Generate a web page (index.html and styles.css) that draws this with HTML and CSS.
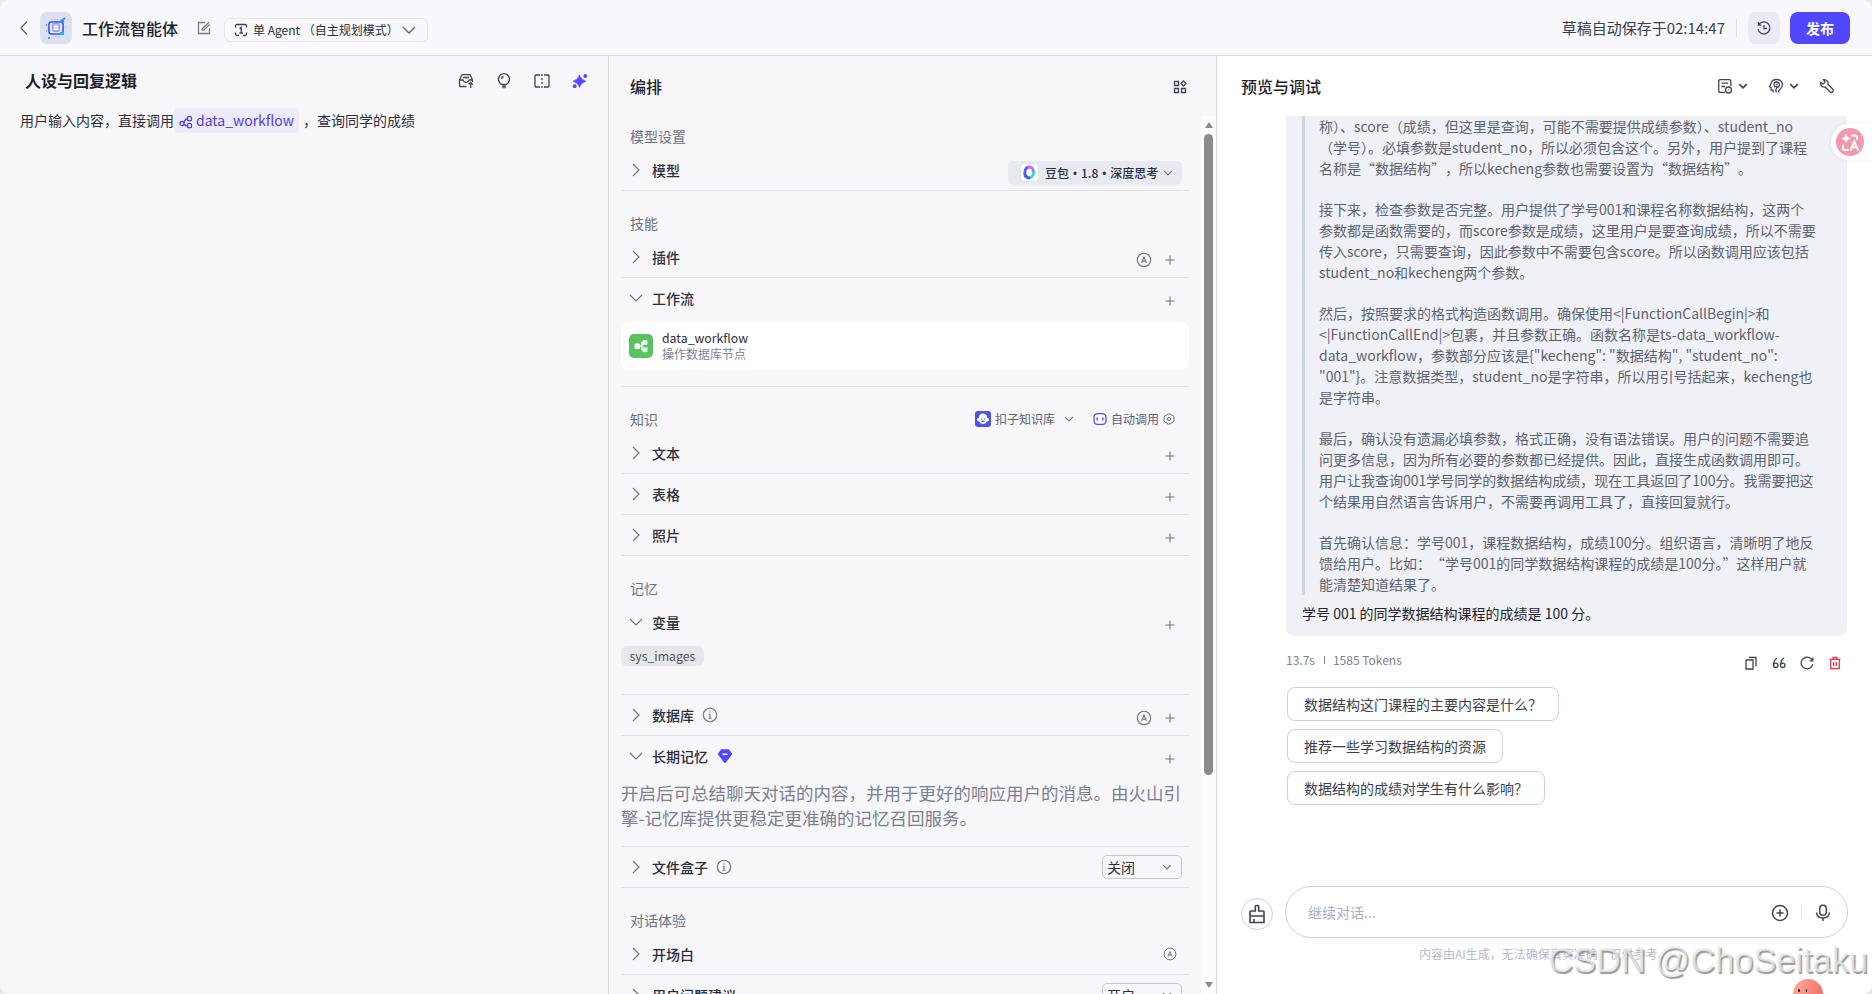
FILE: index.html
```html
<!DOCTYPE html>
<html lang="zh-CN">
<head>
    <meta charset="UTF-8">
    <meta name="viewport" content="width=device-width, initial-scale=1.0">
    <title>工作流智能体</title>
    <link rel="stylesheet" href="styles.css">
</head>
<body>
    <!-- shared icons -->
    <svg width="0" height="0" class="sprite">
        <symbol id="right" viewBox="0 0 16 16"><path d="M5 2l6 6-6 6"/></symbol>
        <symbol id="down" viewBox="0 0 16 16"><path d="M2 5l6 6 6-6"/></symbol>
        <symbol id="plus" viewBox="0 0 16 16"><path d="M8 3.500v9M3.500 8h9"/></symbol>
        <symbol id="auto" viewBox="0 0 16 16"><circle cx="8" cy="8" r="6.700"/><path d="M5.600 11L8 5l2.400 6M6.400 9.200h3.200"/></symbol>
        <symbol id="info" viewBox="0 0 16 16"><circle cx="8" cy="8" r="6.700"/><path d="M8 4.300v1.200M6.700 7.300H8v3.900M6.400 11.300h3.200"/></symbol>
    </svg>

    <div class="app">
        <header class="topbar">
            <svg class="back" width="10" height="16" viewBox="0 0 10 16"><path d="M8 1.500L2 8l6 6.500"/></svg>
            <div class="avatar">
                <svg width="28" height="28" viewBox="0 0 28 28">
                    <rect x="7" y="8" width="14" height="12" rx="2.500" fill="#e6ebff" stroke="#3c50f0" stroke-width="1.600"/>
                    <rect x="10.500" y="9.500" width="7" height="8" rx="1" fill="#b9bdf6" stroke="#8e83ea" stroke-width=".8"/>
                    <path d="M12 12.500h4M12 15h4" stroke="#fff"/>
                    <path d="M18 8l5-4M20 8l2-1" stroke="#2f8df5" stroke-width="2"/>
                    <path d="M18 19.500h4" stroke="#22b7e8" stroke-width="3"/>
                    <circle cx="7" cy="24" r="1" fill="#3c6cf5" stroke="none"/><circle cx="4.500" cy="11" r=".8" fill="#3c6cf5" stroke="none"/>
                    <circle cx="24" cy="13" r=".7" fill="#f0b45a" stroke="none"/><circle cx="4.500" cy="17" r=".6" fill="#3c6cf5" stroke="none"/>
                    <path d="M9 5.500h7M10 22.500h9" stroke="#b9c5f2" stroke-dasharray="2 1"/>
                </svg>
            </div>
            <h1>工作流智能体</h1>
            <svg class="edit" width="14" height="14" viewBox="0 0 14 14"><path d="M8 1.500H1.500v11h11V7M5 9.500V8L12 1.200M5 9.300l2-.3 5.500-5.500"/></svg>
            <div class="mode">
                <svg width="14" height="14" viewBox="0 0 14 14"><path d="M1.500 4.500V3q0-1.500 1.500-1.500h8q1.500 0 1.500 1.500v1.500M1.500 9.500V11q0 1.500 1.500 1.500h2M12.500 9.500V11q0 1.500-1.500 1.500H9M5.500 5.500L7.200 4.300V10M5.500 10h3.400"/></svg>
                <span>单 Agent （自主规划模式）</span>
                <svg class="mode-arrow" width="16" height="16"><use href="#down"/></svg>
            </div>
            <div class="top-right">
                <span class="saved">草稿自动保存于02:14:47</span>
                <i class="sep"></i>
                <button class="history">
                    <svg width="16" height="16" viewBox="0 0 16 16"><path d="M3 4.500A6 6 0 1 1 2 9M2.500 2v3.200h3M8 5v3.500h3"/></svg>
                </button>
                <button class="publish">发布</button>
            </div>
        </header>

        <main>
            <section class="persona">
                <div class="persona-head">
                    <h2>人设与回复逻辑</h2>
                    <div class="tools">
                        <svg width="16" height="16" viewBox="0 0 16 16"><path d="M8.500 13.500H2.500q-1 0-1-1V7L3.500 2.500q.3-.8 1-.8h7q.7 0 1 .8L14.500 7v2M1.500 7h3.500q1 2.500 3 2.500T11 7h3.500M5 4.500h6M12.700 15V9.500M10.500 11.500l2.200-2.200 2.200 2.200"/></svg>
                        <svg width="16" height="16" viewBox="0 0 16 16"><path d="M5.700 11.500Q2.500 9.500 2.500 6.200a5.500 5.500 0 0 1 11 0q0 3.300-3.200 5.300z"/><path d="M5.500 6Q5.700 4 7.500 3.500"/><path d="M6.700 12.500h2.600v2.200H6.700z" fill="#6b7080" stroke="#6b7080"/></svg>
                        <svg width="16" height="16" viewBox="0 0 16 16"><path d="M6 2H2q-1 0-1 1v10q0 1 1 1h4M10 2h4q1 0 1 1v10q0 1-1 1h-4"/><path d="M8 1v14" stroke-dasharray="2 2"/></svg>
                        <svg class="spark" width="16" height="16" viewBox="0 0 16 16"><path d="M7.500 2Q8.800 6.700 14 8.200 8.800 9.700 7.500 14.500 6.200 9.700 1 8.200 6.200 6.700 7.500 2z" stroke="#5147ff"/><circle cx="13.300" cy="3" r="1.900"/><circle cx="2.700" cy="13.200" r="1.900"/></svg>
                    </div>
                </div>
                <p class="prompt"><span>用户输入内容，直接调用</span><span class="chip"><svg width="14" height="14" viewBox="0 0 14 14"><circle cx="3" cy="8.500" r="2"/><rect x="8.500" y="1.700" width="4" height="4" rx="1"/><rect x="8.500" y="8.700" width="4" height="4" rx="1"/><path d="M5 8q.5-4 3.500-4M5 9.500q1.500 1.500 3.500 1.300"/></svg>data_workflow</span><span>，查询同学的成绩</span></p>
            </section>

            <section class="arrange">
                <div class="arrange-head">
                    <h2>编排</h2>
                    <svg width="14" height="14" viewBox="0 0 14 14"><path d="M1.500 1.500h4v4h-4zM1.500 8.500h4v4h-4zM8.500 8.500h4v4h-4zM10.500 1l2.500 2.500L10.500 6 8 3.500z"/></svg>
                </div>
                <div class="scroll">
                    <div class="list">
                        <div class="label first">模型设置</div>
                        <div class="row">
                            <svg class="arrow"><use href="#right"/></svg><b>模型</b>
                            <div class="model">
                                <span class="model-logo"><svg width="16" height="16" viewBox="0 0 16 16"><path d="M4 13C1.500 8 3.500 2 8 2" stroke="#5a55ff"/><path d="M6 2.500c4-1.500 7 2 5.500 6" stroke="#c06bff"/><path d="M12.500 6c.5 4-1.500 7-4.500 7.500" stroke="#29e0b0"/><path d="M3.700 10c.5 3 2.300 4.500 5 3.500" stroke="#2b5bff"/></svg></span>
                                <span>豆包<i>•</i>1.8<i>•</i>深度思考</span>
                                <svg class="small"><use href="#down"/></svg>
                            </div>
                        </div>

                        <div class="label">技能</div>
                        <div class="row">
                            <svg class="arrow"><use href="#right"/></svg><b>插件</b>
                            <div class="acts low"><svg><use href="#auto"/></svg><svg><use href="#plus"/></svg></div>
                        </div>
                        <div class="row open">
                            <svg class="arrow"><use href="#down"/></svg><b>工作流</b>
                            <div class="acts low"><svg><use href="#plus"/></svg></div>
                        </div>
                        <div class="detail workflow">
                            <div class="card">
                                <span class="flow-icon"><svg width="24" height="24" viewBox="0 0 24 24"><path d="M10 12h3V8.500h2M13 12v3.500h2" fill="none" stroke="#fff" stroke-width="1.500"/><rect x="5.500" y="9.500" width="5.500" height="5.500" rx="1"/><rect x="13.500" y="6" width="5" height="5" rx="1" opacity=".8"/><rect x="13.500" y="13.200" width="5" height="5" rx="1" opacity=".8"/></svg></span>
                                <div>
                                    <div class="card-name">data_workflow</div>
                                    <div class="card-desc">操作数据库节点</div>
                                </div>
                            </div>
                        </div>

                        <div class="label">知识
                            <div class="knowledge">
                                <svg width="16" height="16" viewBox="0 0 16 16"><rect width="16" height="16" rx="3" fill="#4f53e8"/><path d="M8 2.500q4 0 4 4.300 2 .2 2 2t-2.300 1.700Q10.800 13 8 13t-3.700-2.500Q2 10.600 2 8.800t2-2Q4 2.500 8 2.500z" fill="#fff"/><path d="M6.500 7.500v1M9.500 7.500v1M6.700 10q1.300 1 2.600 0" fill="none" stroke="#4f53e8"/></svg>
                                <span>扣子知识库</span>
                                <svg class="small"><use href="#down"/></svg>
                                <svg class="call" width="14" height="14" viewBox="0 0 14 14"><rect x="1" y="1.700" width="12" height="10.600" rx="3.500"/><path d="M4.500 5.500L4 7l.5 1.500M9.500 5.500L10 7l-.5 1.500"/></svg>
                                <span>自动调用</span>
                                <svg class="gear" width="12" height="12" viewBox="0 0 12 12"><path d="M4.500 1h3l1 1.300L10.200 2.500 11.300 5 10.500 6l.8 1L10 9.500l-1.500.2L7.500 11h-3l-1-1.300L2 9.500.7 7l.8-1L.7 5 2 2.500l1.500-.2z"/><circle cx="6" cy="6" r="1.600"/></svg>
                            </div>
                        </div>
                        <div class="row">
                            <svg class="arrow"><use href="#right"/></svg><b>文本</b>
                            <div class="acts low"><svg><use href="#plus"/></svg></div>
                        </div>
                        <div class="row">
                            <svg class="arrow"><use href="#right"/></svg><b>表格</b>
                            <div class="acts low"><svg><use href="#plus"/></svg></div>
                        </div>
                        <div class="row">
                            <svg class="arrow"><use href="#right"/></svg><b>照片</b>
                            <div class="acts low"><svg><use href="#plus"/></svg></div>
                        </div>

                        <div class="label">记忆</div>
                        <div class="row open">
                            <svg class="arrow"><use href="#down"/></svg><b>变量</b>
                            <div class="acts low"><svg><use href="#plus"/></svg></div>
                        </div>
                        <div class="detail vars"><span class="var">sys_images</span></div>
                        <div class="row">
                            <svg class="arrow"><use href="#right"/></svg><b>数据库</b>
                            <svg class="info"><use href="#info"/></svg>
                            <div class="acts low"><svg><use href="#auto"/></svg><svg><use href="#plus"/></svg></div>
                        </div>
                        <div class="row open">
                            <svg class="arrow"><use href="#down"/></svg><b>长期记忆</b>
                            <svg class="gem" width="14" height="14" viewBox="0 0 14 14"><path d="M3.500 1h7L13.500 5 7 13.500.5 5z" fill="#5147ff" stroke="#5147ff" stroke-linejoin="round"/><path d="M4.500 5.300h5" stroke="#fff" stroke-width="1.500"/></svg>
                            <div class="acts low"><svg><use href="#plus"/></svg></div>
                        </div>
                        <div class="detail memory">
                            <p>开启后可总结聊天对话的内容，并用于更好的响应用户的消息。由火山引<br>擎-记忆库提供更稳定更准确的记忆召回服务。</p>
                        </div>
                        <div class="row">
                            <svg class="arrow"><use href="#right"/></svg><b>文件盒子</b>
                            <svg class="info"><use href="#info"/></svg>
                            <div class="select">关闭<svg class="small"><use href="#down"/></svg></div>
                        </div>

                        <div class="label">对话体验</div>
                        <div class="row">
                            <svg class="arrow"><use href="#right"/></svg><b>开场白</b>
                            <div class="acts"><svg class="auto-small"><use href="#auto"/></svg></div>
                        </div>
                        <div class="row">
                            <svg class="arrow"><use href="#right"/></svg><b>用户问题建议</b>
                            <div class="select">开启<svg class="small"><use href="#down"/></svg></div>
                        </div>
                    </div>
                    <div class="track">
                        <i class="up"></i>
                        <i class="thumb"></i>
                        <i class="dn"></i>
                    </div>
                </div>
            </section>

            <section class="preview">
                <div class="preview-head">
                    <h2>预览与调试</h2>
                    <div class="preview-tools">
                        <svg width="16" height="16" viewBox="0 0 16 16"><path d="M8 14.300H3q-1.300 0-1.300-1.300V3Q1.700 1.700 3 1.700h9.500q1.300 0 1.300 1.300v5M4.500 5.200h6.500M4.500 8.500h3.500"/><circle cx="11.500" cy="12" r="3"/><path d="M11.500 11.500v1"/></svg>
                        <svg class="bold" width="10" height="10"><use href="#down"/></svg>
                        <svg class="head-icon" width="16" height="16" viewBox="0 0 16 16"><path d="M5 14.500v-2.300H3V9.500L1.500 8.700 2.800 6.500Q3.300 1.500 8.500 1.500q5.500 0 6 5 0 3-2.500 4.800l-1.200 1.200v2M8 14.500v-3.300l1-1.700M6 6.500q0-2.500 2.700-2.500t2.800 2.500q0 2.400-2.500 3L8 8.500H6.500zM8 6.500h1.500"/></svg>
                        <svg class="bold" width="10" height="10"><use href="#down"/></svg>
                        <svg class="wrench" width="16" height="16" viewBox="0 0 16 16"><path d="M4.500 1.700L6 4.200 4.200 6 1.700 4.500Q1 7 3 8.500q1.500 1 3.200.5l5 5q1.300 1 2.500-.2 1.200-1.300.2-2.500l-5-5Q9.500 4.500 8.300 3 6.700 1.300 4.500 1.700z"/></svg>
                    </div>
                </div>

                <div class="chat">
                    <div class="bubble">
                        <blockquote>
                            <p>称）、score（成绩，但这里是查询，可能不需要提供成绩参数）、student_no<br>（学号）。必填参数是student_no，所以必须包含这个。另外，用户提到了课程<br>名称是“数据结构”&#8203;，所以kecheng参数也需要设置为“数据结构”&#8203;。</p>
                            <p>接下来，检查参数是否完整。用户提供了学号001和课程名称数据结构，这两个<br>参数都是函数需要的，而score参数是成绩，这里用户是要查询成绩，所以不需要<br>传入score，只需要查询，因此参数中不需要包含score。所以函数调用应该包括<br>student_no和kecheng两个参数。</p>
                            <p>然后，按照要求的格式构造函数调用。确保使用&lt;|FunctionCallBegin|&gt;和<br>&lt;|FunctionCallEnd|&gt;包裹，并且参数正确。函数名称是ts-data_workflow-<br>data_workflow，参数部分应该是{"kecheng": "数据结构", "student_no":<br>"001"}。注意数据类型，student_no是字符串，所以用引号括起来，kecheng也<br>是字符串。</p>
                            <p>最后，确认没有遗漏必填参数，格式正确，没有语法错误。用户的问题不需要追<br>问更多信息，因为所有必要的参数都已经提供。因此，直接生成函数调用即可。<br>用户让我查询001学号同学的数据结构成绩，现在工具返回了100分。我需要把这<br>个结果用自然语言告诉用户，不需要再调用工具了，直接回复就行。</p>
                            <p>首先确认信息：学号001，课程数据结构，成绩100分。组织语言，清晰明了地反<br>馈给用户。比如：&#8203;“学号001的同学数据结构课程的成绩是100分。”这样用户就<br>能清楚知道结果了。</p>
                        </blockquote>
                        <p class="answer">学号 001 的同学数据结构课程的成绩是 100 分。</p>
                    </div>
                    <div class="meta">
                        <span>13.7s</span><i></i><span>1585 Tokens</span>
                        <div class="meta-acts">
                            <svg width="14" height="14" viewBox="0 0 14 14"><path d="M2 4h7v9H2zM5 1.500h7v9"/></svg>
                            <svg width="14" height="14" viewBox="0 0 14 14"><path d="M5 2Q1.500 4.500 1.500 9M12 2Q8.500 4.500 8.500 9"/><circle cx="3.700" cy="9.300" r="2.200"/><circle cx="10.700" cy="9.300" r="2.200"/></svg>
                            <svg width="14" height="14" viewBox="0 0 14 14"><path d="M12.700 8A5.800 5.800 0 1 1 11 2.800L12.700 4.500M12.800 1.500v3.300H9.700"/></svg>
                            <svg class="trash" width="14" height="14" viewBox="0 0 14 14"><path d="M1.500 3.300h11M5 3V1.500h4V3M2.700 3.500v9h8.600v-9M5.700 6v4M8.300 6v4"/></svg>
                        </div>
                    </div>
                    <div class="asks">
                        <div class="ask">数据结构这门课程的主要内容是什么？</div>
                        <div class="ask">推荐一些学习数据结构的资源</div>
                        <div class="ask">数据结构的成绩对学生有什么影响？</div>
                    </div>
                </div>

                <div class="composer">
                    <div class="clear">
                        <svg width="18" height="20" viewBox="0 0 18 20"><path d="M2 18.500V8q0-1 1-1h4.300V2.500q0-1 1-1h1.400q1 0 1 1V7H15q1 0 1 1v10.500zM2 12h14M6 18v-3"/></svg>
                    </div>
                    <div class="input">
                        <span>继续对话...</span>
                        <svg width="18" height="18" viewBox="0 0 18 18"><circle cx="9" cy="9" r="7.500"/><path d="M9 5.500v7M5.500 9h7"/></svg>
                        <i></i>
                        <svg width="18" height="18" viewBox="0 0 18 18"><rect x="5.700" y="1.300" width="6.600" height="10" rx="3.300"/><path d="M2.500 8.500q.5 5.500 6.500 5.500t6.500-5.500M9 14v3"/></svg>
                    </div>
                </div>
                <p class="tip">内容由AI生成，无法确保真实准确，仅供参考。</p>
            </section>
        </main>
    </div>

    <!-- floating over the page -->
    <div class="translate">
        <svg width="28" height="28" viewBox="0 0 28 28"><circle cx="14" cy="14" r="14" fill="#f299ae"/><path d="M10 5.500q.7 4 4.700 5-4 1-4.700 5-.7-4-4.700-5 4-1 4.700-5z" fill="#fff"/><path d="M16 7.500h3q2 0 2 2v1.200M7 17.500v2.500q0 2 2 2h3M14.700 22l3.600-8.500L22 22M16 19.300h4.700" fill="none" stroke="#fff" stroke-width="2" stroke-linecap="round"/></svg>
    </div>
    <div class="watermark">CSDN @ChoSeitaku</div>
    <div class="mascot"><i></i><i></i></div>
</body>
</html>
```
FILE: styles.css
```css
* {
    box-sizing: border-box;
}
body {
    margin: 0;
    width: 1872px;
    height: 994px;
    overflow: hidden;
    position: relative;
    background-color: #e9e9ec;
    font-family: "Noto Sans CJK SC", sans-serif;
    font-size: 14px;
    color: #2b2f3d;
}
h1, h2, p, blockquote {
    margin: 0;
}
svg {
    display: block;
    flex: none;
    fill: none;
    stroke: #3f4455;
    stroke-width: 1.3;
}
button {
    border: 0;
    padding: 0;
    font-family: inherit;
}
.sprite {
    position: absolute;
}
.app {
    height: 994px;
    border-radius: 9px;
    overflow: hidden;
    background-color: #f7f7fa;
    display: flex;
    flex-direction: column;
}

/* top bar */
.topbar {
    height: 56px;
    flex: none;
    display: flex;
    align-items: center;
    padding: 0 22px 0 18px;
    background-color: #f7f7fc;
    border-bottom: 1px solid #d9d9de;
}
.back {
    margin-left: 1px;
    stroke: #666;
}
.avatar {
    width: 32px;
    height: 32px;
    margin-left: 11px;
    padding: 2px;
    border-radius: 7px;
    background-color: #dbe1f1;
}
.topbar h1 {
    margin-left: 10px;
    font-size: 16px;
    font-weight: 500;
    line-height: 24px;
    color: #1c1f2b;
}
.edit {
    margin-left: 19px;
    stroke: #777b86;
}
.mode {
    display: flex;
    align-items: center;
    width: 204px;
    height: 24px;
    margin: 4px 0 0 13px;
    padding-left: 9px;
    border: 1px solid #e4e4ea;
    border-radius: 6px;
    font-size: 12px;
    color: #2b2f3d;
}
.mode span {
    margin-left: 5px;
    white-space: nowrap;
}
.mode-arrow {
    margin-left: auto;
    margin-right: 10px;
    stroke: #5f6475;
}
.top-right {
    margin-left: auto;
    display: flex;
    align-items: center;
}
.saved {
    font-size: 15px;
    line-height: 22px;
    color: #3a3e4e;
}
.sep {
    width: 1px;
    height: 20px;
    margin: 0 11px;
    background-color: #e2e2ea;
}
.history {
    width: 32px;
    height: 32px;
    padding: 8px;
    border-radius: 8px;
    background-color: #ebebf5;
}
.publish {
    width: 60px;
    height: 32px;
    margin-left: 10px;
    border-radius: 8px;
    background-color: #5147ff;
    color: #fff;
    font-size: 14px;
    font-weight: 700;
}

main {
    flex: 1;
    min-height: 0;
    display: flex;
}
h2 {
    font-size: 16px;
    font-weight: 500;
    line-height: 24px;
    color: #1c1f2b;
}

/* persona */
.persona {
    width: 609px;
    border-right: 1px solid #d9d9de;
}
.persona-head {
    display: flex;
    justify-content: space-between;
    padding: 12px 20px 0 25px;
}
.persona-head h2 {
    font-weight: 700;
}
.tools {
    display: flex;
    align-items: center;
    gap: 22px;
    padding-top: 2px;
}
.tools .spark {
    fill: #5147ff;
    stroke: none;
    stroke-width: 0.6;
}
.prompt {
    display: flex;
    align-items: center;
    height: 25px;
    margin: 16px 0 0 20px;
    line-height: 20px;
}
.prompt > span {
    padding-bottom: 1px;
}
.prompt .chip {
    display: flex;
    align-items: center;
    width: 125px;
    height: 25px;
    padding-left: 5px;
    margin-right: 4px;
    border-radius: 4px;
    background-color: #ebebfa;
    color: #573ddb;
}
.chip svg {
    margin: 3px 3px 0 0;
    stroke: #573ddb;
}

/* arrange */
.arrange {
    width: 608px;
    display: flex;
    flex-direction: column;
    border-right: 1px solid #d9d9de;
}
.arrange-head {
    height: 60px;
    flex: none;
    display: flex;
    justify-content: space-between;
    padding: 18px 29px 0 21px;
}
.arrange-head svg {
    margin-top: 6px;
}
.scroll {
    flex: 1;
    min-height: 0;
    display: flex;
    overflow: hidden;
}
.list {
    width: 568px;
    margin-left: 12px;
    height: 0;
}
.label {
    display: flex;
    height: 46px;
    padding: 21px 14px 0 9px;
    line-height: 22px;
    color: #6d7286;
}
.label.first {
    height: 34px;
    padding-top: 9px;
}
.row {
    display: flex;
    align-items: center;
    height: 41px;
    padding: 0 7px 0 7px;
    border-bottom: 1px solid #e0e1eb;
}
.row.open {
    border-bottom-color: transparent;
}
.row b {
    margin-left: 8px;
    font-weight: 500;
    line-height: 20px;
}
.arrow {
    width: 16px;
    height: 16px;
    stroke: #6d7286;
    stroke-width: 1.2;
}
.info {
    width: 16px;
    height: 16px;
    margin-left: 8px;
    stroke: #6d7286;
    stroke-width: 1.1;
}
.gem {
    margin-left: 10px;
}
.acts {
    display: flex;
    gap: 10px;
    margin-left: auto;
    padding-right: 4px;
}
.acts.low {
    margin-top: 6px;
}
.acts svg {
    width: 16px;
    height: 16px;
    stroke: #6d7286;
    stroke-width: 1.1;
}
.acts .auto-small {
    width: 14px;
    height: 14px;
    margin-right: 1px;
}
.small {
    width: 10px;
    height: 10px;
    stroke: #6d7286;
    stroke-width: 2;
}
.model {
    display: flex;
    align-items: center;
    width: 174px;
    height: 24px;
    margin: 5px 0 0 auto;
    padding: 0 9px 0 12px;
    border-radius: 5px;
    background-color: #e8eaf2;
    font-size: 12px;
    font-weight: 500;
    white-space: nowrap;
}
.model i {
    display: inline-block;
    width: 12px;
    text-align: center;
    font-family: "Noto Sans", sans-serif;
    font-style: normal;
    line-height: 12px;
}
.model-logo {
    width: 19px;
    height: 19px;
    margin-right: 6px;
    padding: 1px;
    border: 1px solid #dfe1ec;
    border-radius: 4px;
    background-color: #fff;
}
.model-logo svg {
    width: 15px;
    height: 15px;
    stroke-width: 3;
}
.model .small {
    margin-left: auto;
}
.detail {
    border-bottom: 1px solid #e0e1eb;
}
.workflow {
    height: 68px;
    padding-top: 3px;
}
.card {
    display: flex;
    align-items: center;
    height: 48px;
    padding-left: 8px;
    border-radius: 8px;
    background-color: #fff;
}
.flow-icon {
    width: 24px;
    height: 24px;
    margin-right: 9px;
    border-radius: 5px;
    background-color: #59c15f;
}
.flow-icon svg {
    fill: #fff;
    stroke: none;
}
.card-name {
    font-size: 12.3px;
    line-height: 16px;
}
.card-desc {
    font-size: 12px;
    line-height: 16px;
    color: #7d8294;
}
.knowledge {
    display: flex;
    align-items: center;
    height: 16px;
    margin: 3px 0 0 auto;
    font-size: 12px;
    color: #5c6175;
}
.knowledge span {
    margin-left: 4px;
}
.knowledge > svg:first-child {
    stroke: none;
}
.knowledge .small {
    margin-left: 9px;
}
.call {
    margin-left: 19px;
    stroke: #4f53e8;
}
.gear {
    margin-left: 4px;
    stroke: #6d7286;
    stroke-width: 1;
}
.vars {
    height: 52px;
    padding-top: 3px;
}
.var {
    display: inline-block;
    height: 20px;
    padding: 0 8.500px;
    border-radius: 6px;
    background-color: #e7e7ea;
    font-size: 12.3px;
    line-height: 20px;
    color: #4f5466;
    vertical-align: top;
}
.memory {
    height: 70px;
    padding-top: 3px;
    font-size: 17.5px;
    line-height: 25px;
    color: #7a7f92;
    white-space: nowrap;
}
.select {
    display: flex;
    align-items: center;
    justify-content: space-between;
    width: 80px;
    height: 24px;
    margin-left: auto;
    padding: 0 9px 0 4px;
    border: 1px solid #c5c8dc;
    border-radius: 5px;
    line-height: 20px;
}
.track {
    width: 15px;
    margin-left: 12px;
    display: flex;
    flex-direction: column;
    align-items: center;
    background-color: #fcfcfc;
}
.up, .dn {
    border: 4px solid transparent;
}
.up {
    margin-top: 2px;
    border-bottom: 6px solid #8b8b8b;
}
.dn {
    margin: auto 0 2px;
    border-top: 6px solid #8b8b8b;
}
.thumb {
    width: 9px;
    height: 641px;
    margin-top: 6px;
    border-radius: 5px;
    background-color: #8b8b8b;
}

/* preview */
.preview {
    flex: 1;
    display: flex;
    flex-direction: column;
    background-color: #fff;
}
.preview-head {
    height: 60px;
    flex: none;
    display: flex;
    justify-content: space-between;
    padding: 18px 37px 0 24px;
}
.preview-tools {
    display: flex;
    align-items: center;
    height: 24px;
}
.preview-tools .bold {
    margin-left: 5px;
    stroke-width: 2.8;
}
.head-icon {
    margin-left: 20px;
}
.wrench {
    margin-left: 20px;
}
.chat {
    width: 561px;
    margin-left: 69px;
    height: 770px;
}
.bubble {
    height: 520px;
    padding: 0 16px;
    border-radius: 0 0 8px 8px;
    background-color: #f0f1f7;
    white-space: nowrap;
}
.bubble blockquote {
    height: 479px;
    padding-left: 14px;
    border-left: 3px solid #ced5df;
    color: #5c6370;
    line-height: 21px;
}
.bubble blockquote p {
    margin-bottom: 20px;
}
.bubble .answer {
    margin-top: 8px;
    line-height: 21px;
    color: #20242e;
}
.meta {
    display: flex;
    align-items: center;
    height: 18px;
    margin-top: 15px;
    font-size: 12px;
    color: #7a7f92;
}
.meta span {
    margin-top: -2px;
}
.meta > i {
    width: 1px;
    height: 8px;
    margin: 0 8px 0 9px;
    background-color: #7a7f92;
}
.meta-acts {
    display: flex;
    gap: 14px;
    margin: 5px 5px 0 auto;
}
.trash {
    stroke: #e5384f;
}
.asks {
    display: flex;
    flex-direction: column;
    align-items: flex-start;
    gap: 8px;
    margin: 18px 0 0 1px;
}
.ask {
    height: 34px;
    padding: 0 16px;
    border: 1px solid #cdcfe0;
    border-radius: 8px;
    line-height: 32px;
    color: #3a3e4e;
}
.composer {
    display: flex;
    align-items: center;
    height: 52px;
    padding: 0 24px;
}
.clear {
    width: 32px;
    height: 32px;
    margin-top: 4px;
    padding: 5px 6px;
    border: 1px solid #cdcfe0;
    border-radius: 50%;
}
.clear svg {
    stroke-width: 1.6;
}
.input {
    display: flex;
    align-items: center;
    width: 563px;
    height: 52px;
    margin-left: 12px;
    padding: 0 15px 0 22px;
    border: 1px solid #cdcfe0;
    border-radius: 26px;
    color: #a9aec6;
}
.input span {
    margin-right: auto;
}
.input svg {
    margin-top: 2px;
    stroke-width: 1.5;
}
.input i {
    width: 1px;
    height: 14px;
    margin: 0 12px;
    background-color: #e2e3ec;
}
.tip {
    margin: 7px 0 0 202px;
    font-size: 12px;
    line-height: 18px;
    color: #b5b9cd;
}

/* overlays */
.translate {
    position: absolute;
    right: 0;
    top: 124px;
    width: 41px;
    height: 36px;
    padding: 4px 5px;
    border-radius: 18px 0 0 18px;
    background-color: #fff;
    box-shadow: 0 0 6px rgba(0, 0, 0, 0.06);
}
.translate svg {
    stroke: none;
}
.watermark {
    position: absolute;
    right: 4px;
    top: 941px;
    font-family: "Liberation Sans", sans-serif;
    font-size: 34.4px;
    line-height: 38px;
    color: rgba(235, 235, 235, 0.8);
    text-shadow: 1.5px 1.5px 1px rgba(120, 120, 120, 0.75);
    white-space: nowrap;
}
.mascot {
    position: absolute;
    left: 1793px;
    top: 979px;
    width: 30px;
    height: 15px;
    padding: 10px 0 0 5px;
    border-radius: 15px 15px 0 0;
    background: linear-gradient(110deg, #ffb09c, #ee7068);
    display: flex;
    gap: 6px;
}
.mascot i {
    width: 1.5px;
    height: 3px;
    border-radius: 1px;
    background-color: #222;
}
```
